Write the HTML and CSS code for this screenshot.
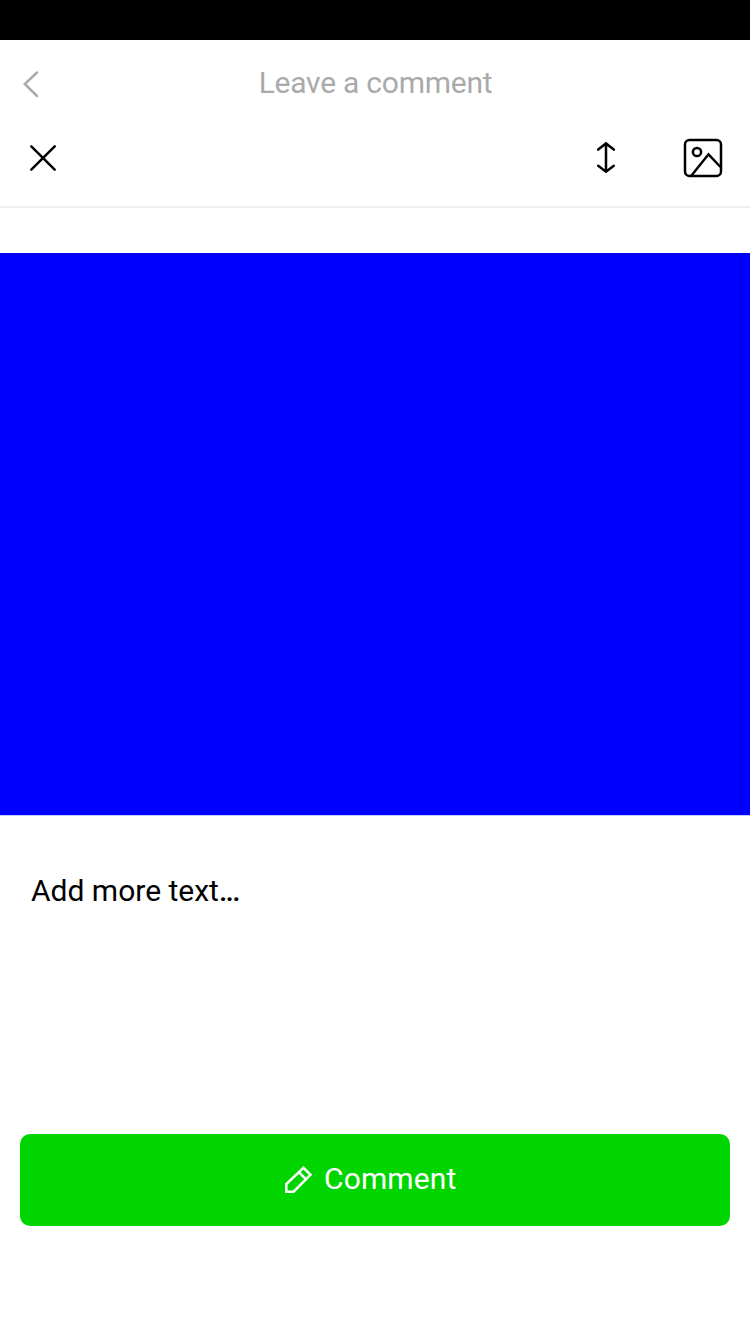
FILE: index.html
```html
<!DOCTYPE html>
<html lang="en">
<head>
<meta charset="utf-8">
<title>Leave a comment</title>
<link rel="stylesheet" href="styles.css">
</head>
<body>
<div class="status-bar"></div>
<header class="header">
  <div class="nav">
    <svg class="back" width="32" height="32" viewBox="0 0 32 32"><path d="M23 4.500 10.800 16 23 28"/></svg>
    <h1 class="title">Leave a comment</h1>
  </div>
  <div class="toolbar">
    <svg class="icon close" width="30" height="30" viewBox="0 0 30 30"><path d="M3.300 3.300 26.700 26.700M26.700 3.300 3.300 26.700"/></svg>
    <svg class="icon resize" width="24" height="36" viewBox="0 0 24 36"><path d="M12 4v27.500M4.200 9.600 12 3.400l7.800 6.200M4.200 25.700 12 31.700l7.800-6"/></svg>
    <svg class="icon" width="40" height="40" viewBox="0 0 40 40"><rect x="2" y="2" width="36" height="36" rx="4.500"/><circle cx="14" cy="14" r="4.100"/><path d="M8.500 37.500 25.500 16.300 37.500 29"/></svg>
  </div>
</header>
<main>
  <div class="picture"></div>
  <p class="text">Add more text<span class="dots">...</span></p>
</main>
<button class="submit">
  <svg class="pencil" width="30" height="30" viewBox="0 0 30 30"><path d="M3.300 26.700V19L20.500 2.800 27.500 9.800 10.500 26.700ZM15.800 7.200 22.800 14.200"/></svg>
  <span class="label">Comment</span>
</button>
</body>
</html>
```
FILE: styles.css
```css
* { box-sizing: border-box; }
body {
  margin: 0;
  height: 1334px;
  overflow: hidden;
  display: flex;
  flex-direction: column;
  background: #fff;
  color: #000;
  font: 30px/40px Roboto, "Liberation Sans", sans-serif;
}
svg { display: block; fill: none; stroke: currentColor; stroke-width: 2.5; }
.status-bar { height: 40px; background: #000; }
.header { height: 168px; border-bottom: 2px solid #f0f0f0; }
.nav {
  height: 88px;
  padding: 0 14px;
  display: grid;
  grid-template-columns: 32px 1fr 32px;
  align-items: center;
  color: #aaa;
}
.back, .close, .resize { stroke-linecap: round; }
.title { margin: 0; padding: 0 0 2px 1px; font-size: 30px; font-weight: 400; text-align: center; letter-spacing: -0.25px; white-space: nowrap; }
.toolbar { height: 60px; padding: 0 27px 0 28px; display: flex; align-items: center; }
.close { margin-right: auto; }
.resize { margin-right: 65px; }
.picture { height: 563px; margin-top: 45px; background: #00f; border-bottom: 1px solid #c8c8ff; }
.text { margin: 55px 30px 0 31px; letter-spacing: 0; }
.dots { font-weight: 500; letter-spacing: -1.7px; }
.submit {
  height: 92px;
  margin: auto 20px 108px;
  padding: 0 10.5px 0 0;
  border: 0;
  border-radius: 10px;
  display: flex;
  align-items: center;
  justify-content: center;
  gap: 11px;
  background: #00d500;
  color: #fff;
  font: inherit;
}
.label { padding-bottom: 2px; letter-spacing: 0.15px; }
```
